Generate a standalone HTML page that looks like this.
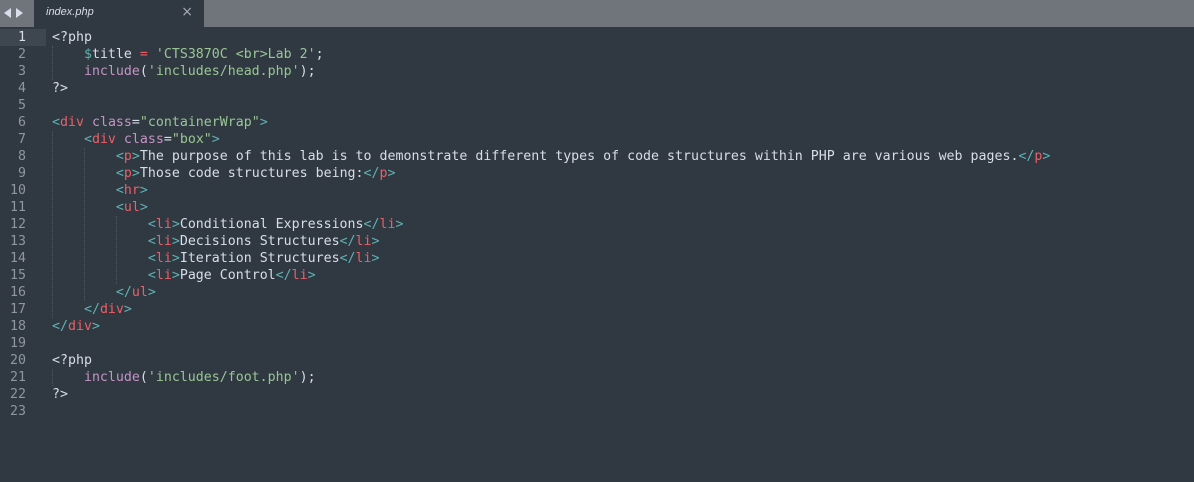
<!DOCTYPE html>
<html><head><style>
*{margin:0;padding:0}
body{width:1194px;height:482px;background:#303841;overflow:hidden;position:relative;font-family:"DejaVu Sans Mono","Liberation Mono",monospace;font-size:13.27px;color:#d8dee9}
#bar{position:absolute;left:0;top:0;width:1194px;height:27px;background:#70757c}
#tab{position:absolute;left:34px;top:0;width:170px;height:27px;background:#303841}
#tab span{position:absolute;left:12px;top:6px;font:italic 11px "Liberation Sans",sans-serif;color:#d8dee9}
#tab b{position:absolute;right:11px;top:4px;font:14px "DejaVu Sans",sans-serif;color:#a6acb5}
.arr{position:absolute;top:8px;width:0;height:0;border-top:5px solid transparent;border-bottom:5px solid transparent}
#hl{position:absolute;left:0;top:29px;width:46px;height:17px;background:#3e4650}
.ln{position:absolute;left:0;width:26px;text-align:right;color:#8f96a1;line-height:17px}
.c{position:absolute;left:52px;white-space:pre;line-height:17px}
.g{position:absolute;width:0;border-left:1px dotted #4e5660}
.t{color:#5fb3b3}.n{color:#ec5f67}.a{color:#c594c5}.s{color:#99c794}.p{color:#c594c5}
</style></head><body>
<div id="bar"></div>
<div class="arr" style="left:4px;border-right:7px solid #d8dee9"></div>
<div class="arr" style="left:16px;border-left:7px solid #d8dee9"></div>
<div id="tab"><span>index.php</span><b>×</b></div>
<div id="hl"></div>
<div class="g" style="left:52px;top:46px;height:34px"></div>
<div class="g" style="left:52px;top:131px;height:187px"></div>
<div class="g" style="left:84px;top:148px;height:153px"></div>
<div class="g" style="left:116px;top:216px;height:68px"></div>
<div class="g" style="left:52px;top:369px;height:17px"></div>
<div class="ln" style="top:29px;color:#d8dee9">1</div><div class="ln" style="top:46px">2</div><div class="ln" style="top:63px">3</div><div class="ln" style="top:80px">4</div><div class="ln" style="top:97px">5</div><div class="ln" style="top:114px">6</div><div class="ln" style="top:131px">7</div><div class="ln" style="top:148px">8</div><div class="ln" style="top:165px">9</div><div class="ln" style="top:182px">10</div><div class="ln" style="top:199px">11</div><div class="ln" style="top:216px">12</div><div class="ln" style="top:233px">13</div><div class="ln" style="top:250px">14</div><div class="ln" style="top:267px">15</div><div class="ln" style="top:284px">16</div><div class="ln" style="top:301px">17</div><div class="ln" style="top:318px">18</div><div class="ln" style="top:335px">19</div><div class="ln" style="top:352px">20</div><div class="ln" style="top:369px">21</div><div class="ln" style="top:386px">22</div><div class="ln" style="top:403px">23</div>
<div class="c" style="top:29px">&lt;?php</div>
<div class="c" style="top:46px">    <span class="t">$</span>title <span class="n">=</span> <span class="s">'CTS3870C &lt;br&gt;Lab 2'</span>;</div>
<div class="c" style="top:63px">    <span class="p">include</span>(<span class="s">'includes/head.php'</span>);</div>
<div class="c" style="top:80px">?&gt;</div>
<div class="c" style="top:114px"><span class="t">&lt;</span><span class="n">div</span> <span class="a">class</span>=<span class="s">"containerWrap"</span><span class="t">&gt;</span></div>
<div class="c" style="top:131px">    <span class="t">&lt;</span><span class="n">div</span> <span class="a">class</span>=<span class="s">"box"</span><span class="t">&gt;</span></div>
<div class="c" style="top:148px">        <span class="t">&lt;</span><span class="n">p</span><span class="t">&gt;</span>The purpose of this lab is to demonstrate different types of code structures within PHP are various web pages.<span class="t">&lt;/</span><span class="n">p</span><span class="t">&gt;</span></div>
<div class="c" style="top:165px">        <span class="t">&lt;</span><span class="n">p</span><span class="t">&gt;</span>Those code structures being:<span class="t">&lt;/</span><span class="n">p</span><span class="t">&gt;</span></div>
<div class="c" style="top:182px">        <span class="t">&lt;</span><span class="n">hr</span><span class="t">&gt;</span></div>
<div class="c" style="top:199px">        <span class="t">&lt;</span><span class="n">ul</span><span class="t">&gt;</span></div>
<div class="c" style="top:216px">            <span class="t">&lt;</span><span class="n">li</span><span class="t">&gt;</span>Conditional Expressions<span class="t">&lt;/</span><span class="n">li</span><span class="t">&gt;</span></div>
<div class="c" style="top:233px">            <span class="t">&lt;</span><span class="n">li</span><span class="t">&gt;</span>Decisions Structures<span class="t">&lt;/</span><span class="n">li</span><span class="t">&gt;</span></div>
<div class="c" style="top:250px">            <span class="t">&lt;</span><span class="n">li</span><span class="t">&gt;</span>Iteration Structures<span class="t">&lt;/</span><span class="n">li</span><span class="t">&gt;</span></div>
<div class="c" style="top:267px">            <span class="t">&lt;</span><span class="n">li</span><span class="t">&gt;</span>Page Control<span class="t">&lt;/</span><span class="n">li</span><span class="t">&gt;</span></div>
<div class="c" style="top:284px">        <span class="t">&lt;/</span><span class="n">ul</span><span class="t">&gt;</span></div>
<div class="c" style="top:301px">    <span class="t">&lt;/</span><span class="n">div</span><span class="t">&gt;</span></div>
<div class="c" style="top:318px"><span class="t">&lt;/</span><span class="n">div</span><span class="t">&gt;</span></div>
<div class="c" style="top:352px">&lt;?php</div>
<div class="c" style="top:369px">    <span class="p">include</span>(<span class="s">'includes/foot.php'</span>);</div>
<div class="c" style="top:386px">?&gt;</div>
</body></html>
